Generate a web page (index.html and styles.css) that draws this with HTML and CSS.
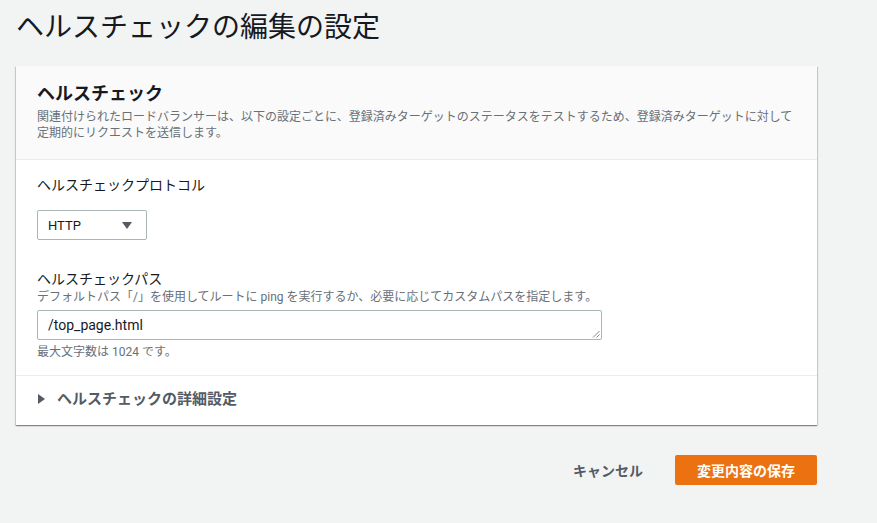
FILE: index.html
```html
<!DOCTYPE html>
<html lang="ja">
<head>
<meta charset="utf-8">
<title>ヘルスチェックの編集の設定</title>
<link rel="stylesheet" href="styles.css">
</head>
<body>
<div class="page">
  <h1 class="page-title">ヘルスチェックの編集の設定</h1>
  <div class="card">
    <div class="card-header">
      <h2 class="card-title">ヘルスチェック</h2>
      <p class="card-desc">関連付けられたロードバランサーは、以下の設定ごとに、登録済みターゲットのステータスをテストするため、登録済みターゲットに対して定期的にリクエストを送信します。</p>
    </div>
    <div class="card-body">
      <div class="field">
        <div class="label">ヘルスチェックプロトコル</div>
        <div class="select">
          <span class="select-value">HTTP</span>
          <svg class="caret" width="10" height="7" viewBox="0 0 10 7"><path d="M0 0H10L5 7Z" fill="#545b64"/></svg>
        </div>
      </div>
      <div class="field field-path">
        <div class="label">ヘルスチェックパス</div>
        <div class="hint">デフォルトパス「/」を使用してルートに ping を実行するか、必要に応じてカスタムパスを指定します。</div>
        <div class="textarea">
          <span class="textarea-value">/top_page.html</span>
          <svg class="resize" width="8" height="8" viewBox="0 0 8 8"><path d="M7.5 1L1 7.5M7.5 4.5L4.5 7.5" stroke="#7d8998" stroke-width="1"/></svg>
        </div>
        <div class="constraint">最大文字数は 1024 です。</div>
      </div>
    </div>
    <div class="card-expand">
      <svg class="expand-caret" width="7" height="10" viewBox="0 0 7 10"><path d="M0 0V10L7 5Z" fill="#545b64"/></svg>
      <span class="expand-text">ヘルスチェックの詳細設定</span>
    </div>
  </div>
  <div class="actions">
    <span class="btn-link">キャンセル</span>
    <span class="btn-primary">変更内容の保存</span>
  </div>
</div>
</body>
</html>
```

FILE: styles.css
```css
html, body {
  margin: 0;
  padding: 0;
  background: #f2f3f3;
}
body {
  font-family: Roboto, "Noto Sans CJK JP", sans-serif;
  color: #16191f;
}
.page {
  padding: 10px 60px 0 16px;
}
.page-title {
  margin: 0 0 20px 0;
  font-size: 28px;
  line-height: 36px;
  font-weight: 400;
  color: #16191f;
}
.card {
  background: #fff;
  box-shadow: 0 1px 1px 0 rgba(0,28,36,.3), 1px 1px 1px 0 rgba(0,28,36,.15), -1px 1px 1px 0 rgba(0,28,36,.15);
}
.card-header {
  background: #fafafa;
  border-bottom: 1px solid #eaeded;
  padding: 17px 20px 18px 21px;
}
.card-title {
  margin: 0;
  font-size: 18px;
  line-height: 22px;
  font-weight: 700;
  color: #16191f;
}
.card-desc {
  margin: 4px 0 0 0;
  font-size: 12px;
  line-height: 16px;
  color: #687078;
}
.card-body {
  padding: 15px 20px 15px 21px;
  border-bottom: 1px solid #eaeded;
}
.label {
  font-size: 14px;
  line-height: 20px;
  color: #16191f;
}
.select {
  margin-top: 15px;
  height: 28px;
  width: 84px;
  border: 1px solid #aab7b8;
  border-radius: 2px;
  display: flex;
  align-items: center;
  justify-content: space-between;
  padding: 0 14px 0 10px;
}
.select-value {
  font-size: 13px;
  color: #16191f;
}
.field-path {
  margin-top: 29px;
}
.hint {
  font-size: 12px;
  line-height: 16px;
  color: #687078;
}
.textarea {
  margin-top: 5px;
  border: 1px solid #aab7b8;
  border-radius: 2px;
  display: flex;
  align-items: center;
  padding-left: 10px;
  box-sizing: border-box;
  width: 565px;
  height: 30px;
  position: relative;
}
.textarea-value {
  font-size: 14px;
  color: #16191f;
}
.resize {
  position: absolute;
  right: 1px;
  bottom: 1px;
}
.constraint {
  margin-top: 4px;
  font-size: 12px;
  line-height: 16px;
  color: #687078;
}
.card-expand {
  display: flex;
  align-items: center;
  gap: 12px;
  padding: 13px 20px 16px 22px;
}
.expand-text {
  font-size: 15px;
  line-height: 20px;
  font-weight: 700;
  color: #545b64;
}
.actions {
  margin-top: 30px;
  display: flex;
  justify-content: flex-end;
  align-items: center;
  gap: 32px;
}
.btn-link {
  font-size: 14px;
  font-weight: 700;
  color: #545b64;
}
.btn-primary {
  background: #ec7211;
  color: #fff;
  font-size: 14px;
  font-weight: 700;
  height: 30px;
  width: 142px;
  display: flex;
  align-items: center;
  justify-content: center;
  border-radius: 2px;
}
```
